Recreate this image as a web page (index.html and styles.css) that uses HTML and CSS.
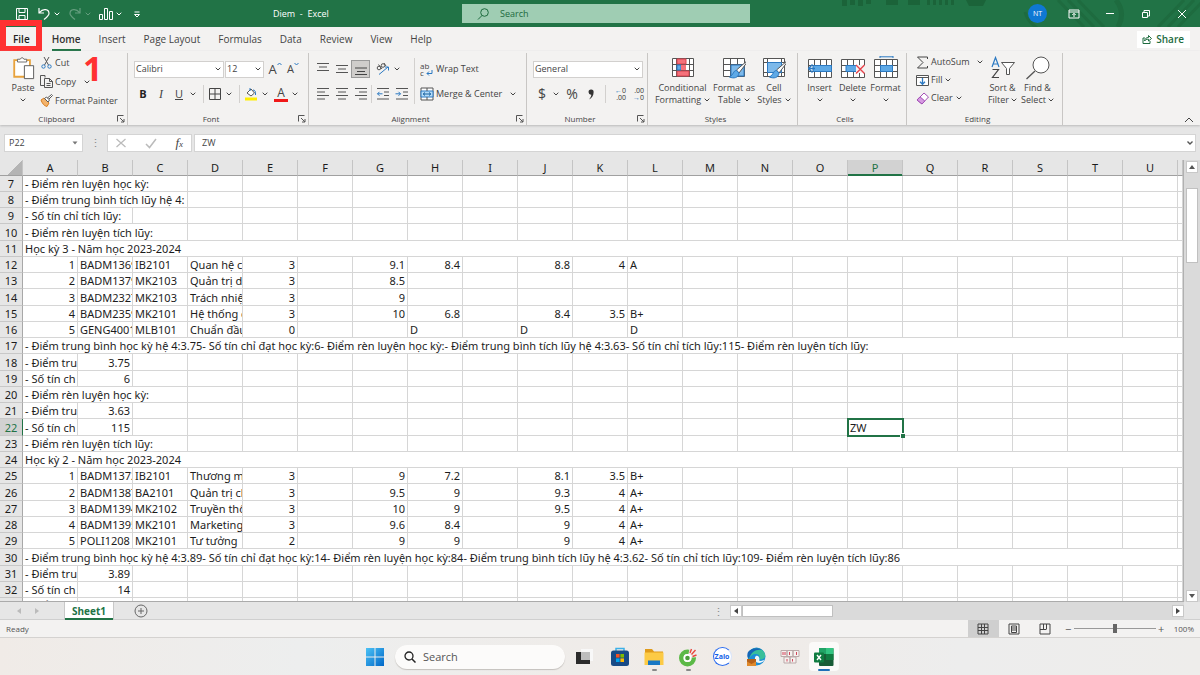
FILE: index.html
```
<!DOCTYPE html>
<html lang="vi">
<head>
<meta charset="utf-8">
<title>Diem - Excel</title>
<link rel="stylesheet" href="styles.css">
</head>
<body>
<svg class="defs" aria-hidden="true">
  <symbol id="chev" viewBox="0 0 6 4"><path d="M.7.7 3 3 5.300.7" fill="none" stroke="#444"/></symbol>
  <symbol id="launch" viewBox="0 0 8 8"><path d="M.5 6.500V.5H6.500M3 3l4 4M7 4v3H4" fill="none" stroke="#555"/></symbol>
  <symbol id="grid" viewBox="0 0 24 20"><path d="M.5.5h23v18H.5zM.5 6.500h23M.5 12.500h23M6.500.5v18M12.500.5v18M18.500.5v18" fill="#fff" stroke="#555"/></symbol>
  <symbol id="brush" viewBox="0 0 18 18"><path d="M17 .8 7.500 9l2.500 3L17.500 2z" fill="#fff" stroke="#555"/><path d="M7.300 9.500c-3 0-2.500 4-6.800 6.500 4 1.800 9 1 9.500-4z" fill="#5ea9e6" stroke="#2b79c2"/></symbol>
</svg>

<header class="titlebar">
  <svg class="pattern" viewBox="0 0 360 27" aria-hidden="true">
    <g fill="#1b6339"><path d="M2 0h5v6H2zM10 0h5v5h-5zM18 0h5v6h-5zM26 0h5v4h-5zM46 0h12v5H46zM68 0h12v5H68zM87 0h3v5h-3zM93 0h3v5h-3zM99 0h3v5h-3zM105 0h3v5h-3zM111 0h3v5h-3zM126 0h20l-3 6h-14z"/></g>
    <g stroke="#1e6b3f" stroke-width="3" fill="none"><path d="M185 12q2 9 12 16M218 0l26 27M228 0l26 27M238 0l26 27M318 27l26-27M328 27l26-27M338 27l24-25"/><path d="M276 0q10 13 2 27" stroke-width="5"/></g>
  </svg>
  <div class="qat">
    <button aria-label="Save"><svg viewBox="0 0 14 14"><path d="M1.500 1.500h11v11h-11zM4 1.500v4h6v-4M4 12.500v-4h6v4" fill="none" stroke="#fff"/></svg></button>
    <button aria-label="Undo"><svg viewBox="0 0 14 14"><path d="M2 1v5h5M2.500 5.500C6 1 12 2 12 6.500c0 2-2 3.500-5 6" fill="none" stroke="#fff" stroke-width="1.200"/></svg></button>
    <button class="drop" aria-label="Undo list"><svg class="chev light"><use href="#chev"/></svg></button>
    <button class="off" aria-label="Redo"><svg viewBox="0 0 14 14"><path d="M12 1v5H7M11.500 5.500C8 1 2 2 2 6.500c0 2 2 3.500 5 6" fill="none" stroke="#fff" stroke-width="1.200"/></svg></button>
    <button class="drop off" aria-label="Redo list"><svg class="chev light"><use href="#chev"/></svg></button>
    <button aria-label="Chart"><svg viewBox="0 0 14 14"><path d="M.5 7.500h3v5h-3zM5.500 1.500h3v11h-3zM10.500 4.500h3v8h-3z" fill="none" stroke="#fff"/></svg></button>
    <button class="drop" aria-label="Chart list"><svg class="chev light"><use href="#chev"/></svg></button>
    <button aria-label="Customize"><svg viewBox="0 0 14 14"><path d="M4.500 5h5M4.500 7.500h5L7 10z" fill="none" stroke="#fff"/></svg></button>
  </div>
  <div class="doc">Diem&nbsp; -&nbsp; Excel</div>
  <label class="top-search"><svg viewBox="0 0 12 12"><circle cx="7.500" cy="4.500" r="3.800" fill="none" stroke="#1d6b3e"/><path d="M5 7.500 1 11.500" stroke="#1d6b3e"/></svg><input type="text" placeholder="Search" aria-label="Search"></label>
  <div class="win">
    <span class="avatar">NT</span>
    <button aria-label="Ribbon options"><svg viewBox="0 0 12 12"><path d="M1 2h10v8H1zM1 4h10M6 9V5.500M4.300 7 6 5.300 7.700 7" fill="none" stroke="#fff"/></svg></button>
    <button aria-label="Minimize"><svg viewBox="0 0 12 12"><path d="M2 5.500h8" stroke="#fff"/></svg></button>
    <button aria-label="Restore"><svg viewBox="0 0 12 12"><path d="M2.500 4.500h5v5h-5zM4 4.500V2.500h5.500V8H7.500" fill="none" stroke="#fff"/></svg></button>
    <button aria-label="Close"><svg viewBox="0 0 12 12"><path d="m2 2 8 8M10 2l-8 8" stroke="#fff"/></svg></button>
  </div>
</header>

<nav class="tabs">
  <a class="file" href="#">File</a><a class="on" href="#">Home</a><a href="#">Insert</a><a href="#">Page Layout</a><a href="#">Formulas</a><a href="#">Data</a><a href="#">Review</a><a href="#">View</a><a href="#">Help</a>
  <button class="share"><svg viewBox="0 0 10 10"><path d="M3 4H1v5.500h7V7M2.500 7c.3-2.500 2-3.500 4-3.500V1.500L9.500 4.500 6.500 7V5.200c-2 0-3 .6-4 1.800z" fill="none" stroke="#1d6b3e"/></svg>Share</button>
  <span class="mark-box"></span>
  <span class="mark-num">1</span>
</nav>

<section class="ribbon">
  <div class="group">
    <div class="body clip">
      <button class="big"><svg viewBox="0 0 24 26"><path d="M2.500 4.500h17v18h-17z" fill="#fff" stroke="#e8a33d" stroke-width="2"/><path d="M6 6.500v-3h3Q11 0 13 3.500h3v3z" fill="#fff" stroke="#666"/><path d="M13.500 10.500h10v14h-10z" fill="#fff" stroke="#555"/></svg>Paste<svg class="chev"><use href="#chev"/></svg></button>
      <div class="list">
        <button><svg viewBox="0 0 13 13"><path d="M4 1l4.500 8M9 1 4.500 9" stroke="#555" fill="none"/><g fill="none" stroke="#2b79c2"><circle cx="3.500" cy="10.500" r="1.700"/><circle cx="9.500" cy="10.500" r="1.700"/></g></svg>Cut</button>
        <button><svg viewBox="0 0 13 13"><path d="M5 2.500V.5H.5v10H4M4.500 3.500h5l3 3v6h-8zM9.500 3.500v3h3M6.500 8.500h4M6.500 10.500h4" fill="none" stroke="#555"/></svg>Copy<svg class="chev gap"><use href="#chev"/></svg></button>
        <button><svg viewBox="0 0 13 13"><path d="M1 6l3-2 5 5-2 3.500C4 12 2 9 1 6z" fill="#f3b36b" stroke="#d97f22"/><path d="m4.500 4.500 2-1.500L9.500 6 8 8zM7.500 4l4-3.500 1 1L9 5" fill="#fff" stroke="#555"/></svg>Format Painter</button>
      </div>
    </div>
    <div class="foot"><span>Clipboard</span><button aria-label="Clipboard settings"><svg><use href="#launch"/></svg></button></div>
  </div>

  <div class="group">
    <div class="body rows">
      <div class="row">
        <span class="combo wide"><select aria-label="Font"><option>Calibri</option></select><svg class="chev"><use href="#chev"/></svg></span>
        <span class="combo narrow"><select aria-label="Font size"><option>12</option></select><svg class="chev"><use href="#chev"/></svg></span>
        <button class="tool letter" aria-label="Grow font">A<svg viewBox="0 0 5 5"><path d="M.5 3 2.500 1l2 2" fill="none" stroke="#2b79c2"/></svg></button>
        <button class="tool letter small" aria-label="Shrink font">A<svg viewBox="0 0 5 5"><path d="m.5 1 2 2 2-2" fill="none" stroke="#2b79c2"/></svg></button>
      </div>
      <div class="row">
        <button class="tool"><b>B</b></button><button class="tool"><i>I</i></button><button class="tool"><u>U</u></button><button class="drop" aria-label="Underline list"><svg class="chev"><use href="#chev"/></svg></button>
        <span class="sep"></span>
        <button class="tool" aria-label="Borders"><svg viewBox="0 0 14 14"><path d="M1.500 1.500h11v11h-11zM7 1.500v11M1.500 7h11" fill="none" stroke="#444"/></svg></button><button class="drop" aria-label="Border list"><svg class="chev"><use href="#chev"/></svg></button>
        <span class="sep"></span>
        <button class="tool" aria-label="Fill color"><svg viewBox="0 0 14 14"><path d="M3 6l4-4 3.500 4L7 9z" fill="#fff" stroke="#555"/><path d="M6 1v3M9 3q3 0 2.500 5" fill="none" stroke="#2b79c2"/><path d="M1 10.500h12v3H1z" fill="#ffee00"/></svg></button><button class="drop" aria-label="Fill list"><svg class="chev"><use href="#chev"/></svg></button>
        <button class="tool fontcolor">A</button><button class="drop" aria-label="Font color list"><svg class="chev"><use href="#chev"/></svg></button>
      </div>
    </div>
    <div class="foot"><span>Font</span><button aria-label="Font settings"><svg><use href="#launch"/></svg></button></div>
  </div>

  <div class="group">
    <div class="body align">
      <div class="rows">
        <div class="row">
          <button class="tool" aria-label="Top align"><svg viewBox="0 0 14 14"><path d="M1 1.500h12M3 5h8M1 8.500h12" stroke="#555"/></svg></button><button class="tool" aria-label="Middle align"><svg viewBox="0 0 14 14"><path d="M1 3.500h12M3 7h8M1 10.500h12" stroke="#555"/></svg></button><button class="tool on" aria-label="Bottom align"><svg viewBox="0 0 14 14"><path d="M1 6h12M3 9.500h8M1 12.500h12" stroke="#444"/></svg></button>
          <span class="sep blank"></span>
          <button class="tool" aria-label="Orientation"><svg viewBox="0 0 14 14"><g fill="none" stroke="#555"><circle cx="3" cy="6" r="1.800"/><path d="M2.500 2.500 6 7"/><circle cx="7" cy="3.500" r="1.800"/><path d="m8 1 2 3"/></g><path d="M3 12.500 12 5M9 5h3.500v3.500" fill="none" stroke="#2b79c2"/></svg></button><button class="drop" aria-label="Orientation list"><svg class="chev"><use href="#chev"/></svg></button>
        </div>
        <div class="row">
          <button class="tool" aria-label="Align left"><svg viewBox="0 0 14 14"><path d="M1 1.500h12M1 5h8M1 8.500h12M1 12h8" stroke="#555"/></svg></button><button class="tool" aria-label="Center"><svg viewBox="0 0 14 14"><path d="M1 1.500h12M3 5h8M1 8.500h12M3 12h8" stroke="#555"/></svg></button><button class="tool" aria-label="Align right"><svg viewBox="0 0 14 14"><path d="M1 1.500h12M5 5h8M1 8.500h12M5 12h8" stroke="#555"/></svg></button>
          <span class="sep"></span>
          <button class="tool" aria-label="Decrease indent"><svg viewBox="0 0 14 14"><path d="M1 1.500h12M8 5h5M8 8.500h5M1 12h12" stroke="#555"/><path d="M6.500 6.800h-5M3.500 4.800l-2 2 2 2" fill="none" stroke="#2b79c2"/></svg></button><button class="tool" aria-label="Increase indent"><svg viewBox="0 0 14 14"><path d="M1 1.500h12M8 5h5M8 8.500h5M1 12h12" stroke="#555"/><path d="M.5 6.800h5M3.500 4.800l2 2-2 2" fill="none" stroke="#2b79c2"/></svg></button>
        </div>
      </div>
      <span class="sep tall"></span>
      <div class="rows">
        <button class="row text"><span class="wrapicon">ab<br>c<svg viewBox="0 0 7 6"><path d="M6 0v3.500H1M3 1.500l-2 2 2 2" fill="none" stroke="#2b79c2"/></svg></span>Wrap Text</button>
        <button class="row text"><svg class="ic14" viewBox="0 0 14 14"><path d="M1 1h12v12H1z" fill="#fff" stroke="#555"/><path d="M1 4h12v6H1z" fill="#b5dbf7" stroke="#2b79c2"/><path d="M7 1v3M7 10v3" stroke="#555"/><path d="M3 7h8M5 5.500 3.300 7 5 8.500M9 5.500 10.700 7 9 8.500" fill="none" stroke="#17609f"/></svg>Merge &amp; Center<svg class="chev gap"><use href="#chev"/></svg></button>
      </div>
    </div>
    <div class="foot"><span>Alignment</span><button aria-label="Alignment settings"><svg><use href="#launch"/></svg></button></div>
  </div>

  <div class="group">
    <div class="body rows number">
      <div class="row"><span class="combo full"><select aria-label="Number format"><option>General</option></select><svg class="chev"><use href="#chev"/></svg></span></div>
      <div class="row">
        <button class="tool sym">$</button><button class="drop" aria-label="Currency list"><svg class="chev"><use href="#chev"/></svg></button><button class="tool sym pct">%</button><button class="tool sym" aria-label="Comma style"><svg viewBox="0 0 14 14"><path d="M7 2.500a2.500 2.500 0 0 1 2.600 2.700C9.600 8.500 8 11 5 12.500c1.500-1.800 2.300-3.200 2.300-4.800A2.500 2.500 0 0 1 7 2.500z" fill="#333"/></svg></button>
        <span class="sep"></span>
        <button class="tool dec"><span><em>←</em>0</span><span>.00</span></button><button class="tool dec"><span>.00</span><span><em>→</em>0</span></button>
      </div>
    </div>
    <div class="foot"><span>Number</span><button aria-label="Number settings"><svg><use href="#launch"/></svg></button></div>
  </div>

  <div class="group">
    <div class="body bigs styles">
      <button class="big"><svg viewBox="0 0 24 24"><path d="M1.500 2.500h21v18h-21zM1.500 8.500h21M1.500 14.500h21M5.500 2.500v18M18.500 2.500v18" fill="#fff" stroke="#555"/><path d="M6 3h9v5H6zM6 15h12v5H6z" fill="#f5717a" stroke="#d8434e"/><path d="M6 9h4v5H6z" fill="#5ea9e6" stroke="#2b79c2"/><path d="M10 9h5v5h-5z" fill="#f5717a"/></svg>Conditional<span>Formatting<svg class="chev"><use href="#chev"/></svg></span></button>
      <button class="big"><svg viewBox="0 0 24 24"><path d="M1.500 2.500h21v18h-21zM1.500 8.500h21M1.500 14.500h21M8.500 2.500v18M15.500 2.500v18" fill="#fff" stroke="#555"/><path d="M9 9h13v11H9z" fill="#7db9ea" stroke="#2b79c2"/><use href="#brush" x="7" y="5" width="18" height="18"/></svg>Format as<span>Table<svg class="chev"><use href="#chev"/></svg></span></button>
      <button class="big"><svg viewBox="0 0 24 24"><path d="M1.500 2.500h21v18h-21zM1.500 6.500h21M1.500 16.500h21M5.500 2.500v18M19.500 2.500v18" fill="#fff" stroke="#555"/><path d="M5.500 6.500h14v10h-14z" fill="#7db9ea" stroke="#2b79c2"/><use href="#brush" x="7" y="5" width="18" height="18"/></svg>Cell<span>Styles<svg class="chev"><use href="#chev"/></svg></span></button>
    </div>
    <div class="foot"><span>Styles</span></div>
  </div>

  <div class="group">
    <div class="body bigs cells">
      <button class="big"><svg viewBox="0 0 24 24"><use href="#grid" y="3" width="24" height="20"/><path d="M5 9.500h18.500v6H5z" fill="#5ea9e6" stroke="#2b79c2"/><path d="M7 12.500H.8M4.500 8.500l-4 4 4 4" fill="none" stroke="#2b79c2" stroke-width="1.400"/></svg>Insert<svg class="chev"><use href="#chev"/></svg></button>
      <button class="big"><svg viewBox="0 0 24 24"><use href="#grid" y="3" width="24" height="20"/><path d="M5 9.500h11v6H5z" fill="#5ea9e6" stroke="#2b79c2"/><path d="M15 9h9v8h-9z" fill="#f3f2f1"/><path d="m15 9 8.500 8.500M23.500 9 15 17.500" stroke="#e8424c" stroke-width="1.400"/></svg>Delete<svg class="chev"><use href="#chev"/></svg></button>
      <button class="big"><svg viewBox="0 0 24 24"><use href="#grid" y="3" width="24" height="20"/><path d="M6.500 9.500h12v6h-12z" fill="#5ea9e6" stroke="#2b79c2"/><path d="M6 .8h13M6 0v2M19 0v2" stroke="#2b79c2"/></svg>Format<svg class="chev"><use href="#chev"/></svg></button>
    </div>
    <div class="foot"><span>Cells</span></div>
  </div>

  <div class="group">
    <div class="body edit">
      <div class="list">
        <button><svg viewBox="0 0 13 13"><path d="M11.500 3V1H1.500L7 6.500 1.500 12h10v-2" fill="none" stroke="#444"/></svg>AutoSum<svg class="chev gap"><use href="#chev"/></svg></button>
        <button><svg viewBox="0 0 13 13"><path d="M.5 1.500h12v10H.5zM.5 3.500h12" fill="#fff" stroke="#555"/><path d="M6.500 4v6M4 7.800l2.500 2.500L9 7.800" fill="none" stroke="#2b79c2" stroke-width="1.300"/></svg>Fill<svg class="chev"><use href="#chev"/></svg></button>
        <button><svg viewBox="0 0 13 13"><path d="M8 1l4.500 4L6 12 1 8z" fill="#fff" stroke="#a24fb5"/><path d="M4 4.800 8.800 9 6 12 1 8z" fill="#d79be2" stroke="#a24fb5"/></svg>Clear<svg class="chev"><use href="#chev"/></svg></button>
      </div>
      <button class="big"><svg viewBox="0 0 24 24"><path d="M1 11 4.500 1.500 8 11M2.300 8h4.500" fill="none" stroke="#2b79c2" stroke-width="1.200"/><path d="M1.500 13.500h6l-6 8h6.500" fill="none" stroke="#444" stroke-width="1.200"/><path d="M10.500 6.500h13l-5 6v6h-3v-6z" fill="#fff" stroke="#555"/></svg>Sort &amp;<span>Filter<svg class="chev"><use href="#chev"/></svg></span></button>
      <button class="big"><svg viewBox="0 0 24 24"><circle cx="15" cy="9" r="8" fill="#fff" stroke="#555"/><path d="m9 15-8.500 8" stroke="#555" stroke-width="1.300"/></svg>Find &amp;<span>Select<svg class="chev"><use href="#chev"/></svg></span></button>
    </div>
    <div class="foot"><span>Editing</span></div>
  </div>
  <button class="collapse" aria-label="Collapse ribbon"><svg viewBox="0 0 10 6"><path d="M1 5l4-4 4 4" fill="none" stroke="#444"/></svg></button>
</section>

<section class="formula">
  <label class="namebox"><input type="text" value="P22" aria-label="Name box"><svg viewBox="0 0 6 4"><path d="M.5.5h5L3 3.500z" fill="#777"/></svg></label>
  <span class="dots">⋮</span>
  <div class="fx">
    <button aria-label="Cancel"><svg viewBox="0 0 12 12"><path d="m1.500 2 9 8M10.500 2l-9 8" stroke="#bbb" stroke-width="1.300"/></svg></button>
    <button aria-label="Enter"><svg viewBox="0 0 12 12"><path d="m1 7 3.500 3.500L11 2" fill="none" stroke="#bbb" stroke-width="1.500"/></svg></button>
    <button class="fn"><i>f</i><sub>x</sub></button>
  </div>
  <label class="entry"><input type="text" value="ZW" aria-label="Formula"><svg viewBox="0 0 6 4"><path d="M.5.5 3 3 5.500.5" fill="none" stroke="#555" stroke-width="1.400"/></svg></label>
</section>

<main class="sheet">
  <div class="view"><table id="cells"></table></div>
  <div class="vbar">
    <button aria-label="Scroll up"><svg viewBox="0 0 6 4"><path d="M0 4h6L3 0z" fill="#555"/></svg></button>
    <span class="thumb"></span>
    <button aria-label="Scroll down"><svg viewBox="0 0 6 4"><path d="M0 0h6L3 4z" fill="#555"/></svg></button>
  </div>
</main>

<section class="strip">
  <div class="sheets">
    <span class="arrows"><svg viewBox="0 0 4 6"><path d="M4 0v6L0 3z" fill="#bbb"/></svg><svg viewBox="0 0 4 6"><path d="M0 0v6l4-3z" fill="#bbb"/></svg></span>
    <button class="tab">Sheet1</button>
    <button class="add" aria-label="New sheet"><svg viewBox="0 0 14 14"><circle cx="7" cy="7" r="6" fill="none" stroke="#666"/><path d="M7 4v6M4 7h6" stroke="#666"/></svg></button>
    <span class="dots">⋮</span>
  </div>
  <div class="hbar">
    <button aria-label="Scroll left"><svg viewBox="0 0 4 6"><path d="M4 0v6L0 3z" fill="#444"/></svg></button>
    <span class="thumb"></span>
    <button class="end" aria-label="Scroll right"><svg viewBox="0 0 4 6"><path d="M0 0v6l4-3z" fill="#444"/></svg></button>
  </div>
</section>

<section class="status">
  <span class="ready">Ready</span>
  <button class="on" aria-label="Normal view"><svg viewBox="0 0 12 12"><path d="M1 1h10v10H1zM1 4.500h10M1 7.500h10M4.500 1v10M7.500 1v10" fill="none" stroke="#444"/></svg></button>
  <button aria-label="Page layout view"><svg viewBox="0 0 12 12"><path d="M1 1h10v10H1zM3.500 3h5v6.500h-5zM4 5h4M4 7h4" fill="none" stroke="#444"/></svg></button>
  <button aria-label="Page break view"><svg viewBox="0 0 12 12"><path d="M1 1h10v10H1zM4.500 1v5M7.500 1v5M1 6.500h6.500" fill="none" stroke="#444"/></svg></button>
  <div class="zoom"><button>−</button><input type="range" aria-label="Zoom" min="0" max="100" value="50"><button>+</button><span>100%</span></div>
</section>

<footer class="taskbar">
  <button class="start" aria-label="Start"><svg viewBox="0 0 20 20"><defs><linearGradient id="w" x2="1" y2="1"><stop stop-color="#4cc2f5"/><stop offset="1" stop-color="#0067c8"/></linearGradient></defs><path d="M1 1h8.500v8.500H1zM10.500 1H19v8.500h-8.500zM1 10.500h8.500V19H1zM10.500 10.500H19V19h-8.500z" fill="url(#w)"/></svg></button>
  <label class="task-search"><svg viewBox="0 0 12 12"><circle cx="5" cy="5" r="4" fill="none" stroke="#222" stroke-width="1.300"/><path d="m8 8 3.500 3.500" stroke="#222" stroke-width="1.500"/></svg><input type="text" placeholder="Search" aria-label="Search Windows"></label>
  <div class="apps">
    <button class="view-btn" aria-label="Task view"><svg viewBox="0 0 20 20"><path d="M7 2h12v12H7z" fill="#f8f8f8"/><path d="M2 5h14v12H2z" fill="#2b2b2b"/><path d="M7 5h9v8H7z" fill="#bdbdbd"/></svg></button>
    <button aria-label="Store"><svg viewBox="0 0 20 20"><path d="M6 4V1.500h8V4" fill="none" stroke="#3cb0e8" stroke-width="1.500"/><rect x="1" y="3.500" width="18" height="15.500" rx="2.500" fill="#174a86"/><path d="M6 7h3.600v3.600H6z" fill="#f25022"/><path d="M10.400 7H14v3.600h-3.600z" fill="#7fba00"/><path d="M6 11.400h3.600V15H6z" fill="#00a4ef"/><path d="M10.400 11.400H14V15h-3.600z" fill="#ffb900"/></svg></button>
    <button class="run" aria-label="Explorer"><svg viewBox="0 0 20 20"><path d="M1 2h7l2 2.500h9V9H1z" fill="#e09b1b"/><path d="M.5 5.500h19V18H.5z" fill="#fcca45"/><path d="M4 13.500h12V18H4z" fill="#1777c4"/></svg></button>
    <button class="run" aria-label="Coc Coc"><svg viewBox="0 0 20 20"><circle cx="9.500" cy="11" r="6.200" fill="none" stroke="#5cb947" stroke-width="4.600"/><path d="M9.500 11 12 0h8v10z" fill="#efedeb"/><circle cx="9.500" cy="11" r="4" fill="#fff"/><circle cx="9.500" cy="11" r="2.300" fill="#4c9c3a"/><path d="m12 6 1.500-4M13.500 7.500 17.500 3M14.500 9.500l4-1.500" stroke="#e9483c" stroke-width="1.400"/></svg></button>
    <button class="zalo"><span>Zalo</span></button>
    <button aria-label="Edge"><svg viewBox="0 0 20 20"><circle cx="10.500" cy="9.500" r="9" fill="#1b8fd6"/><path d="M2 6C5 0 16-1 19 7c1 4-2 6-6 5.500 2-4-1-6-4-5.500-4 .5-6 4-6 7z" fill="#39bf9a"/><path d="M10 9c3-1 4 3 3 4.500 2 1 4.500 0 6-1-2 3-5 4-8 3-2-1-3-5-1-6.500z" fill="#eef6fb"/><path d="M2 5C5 1 12 0 16 3 10 2 5 5 3 12 1 10 1 7 2 5z" fill="#1466b8"/><path d="M1 12h9v7H1z" fill="#b4611b"/><path d="M1 14.500 5.500 17 10 14.500V19H1z" fill="#e08a2c"/></svg></button>
    <button aria-label="Unikey"><svg viewBox="0 0 20 20"><path d="M1 3.500h6v6H1zM7 3.500h6v6H7zM13 3.500h6v6h-6zM4 10h6v6H4zM10 10h6v6h-6z" fill="#f6f1ef" stroke="#bba9a9"/><path d="M3 5v3M5 5v3M9.500 5v3M16.500 5v3M7 12v2.500M12.500 12v2.500" fill="none" stroke="#d2455a"/></svg></button>
    <button class="active" aria-label="Excel"><svg viewBox="0 0 20 20"><rect x="5" y="1" width="14.500" height="18" rx="1" fill="#185c37"/><path d="M5 1h7v6H5z" fill="#21a366"/><path d="M12 1h7.500v6H12z" fill="#33c481"/><path d="M12 7h7.500v6H12z" fill="#107c41"/><rect y="5.500" width="10" height="10" rx="1" fill="#107c41"/><path d="m3 8 4 5M7 8l-4 5" stroke="#fff" stroke-width="1.400"/></svg></button>
  </div>
</footer>
<script src="sheet.js"></script>
</body>
</html>
```
FILE: sheet.js
```
const columns = 'ABCDEFGHIJKLMNOPQRSTU'.split('');
const full = columns.length + 1;

// Each row maps a column letter to its text; span is the width of column A in columns.
const rows = [
  { span: 3, A: '- Điểm rèn luyện học kỳ:' },
  { span: 3, A: '- Điểm trung bình tích lũy hệ 4:' },
  { span: 2, A: '- Số tín chỉ tích lũy:' },
  { span: 3, A: '- Điểm rèn luyện tích lũy:' },
  { span: full, A: 'Học kỳ 3 - Năm học 2023-2024' },
  { A: 1, B: 'BADM1369', C: 'IB2101', D: 'Quan hệ c', E: 3, G: 9.1, H: 8.4, J: 8.8, K: 4, L: 'A' },
  { A: 2, B: 'BADM1379', C: 'MK2103', D: 'Quản trị d', E: 3, G: 8.5 },
  { A: 3, B: 'BADM2327', C: 'MK2103', D: 'Trách nhiệ', E: 3, G: 9 },
  { A: 4, B: 'BADM2359', C: 'MK2101', D: 'Hệ thống c', E: 3, G: 10, H: 6.8, J: 8.4, K: 3.5, L: 'B+' },
  { A: 5, B: 'GENG4001', C: 'MLB101', D: 'Chuẩn đầu', E: 0, H: 'D', J: 'D', L: 'D' },
  { span: full, A: '- Điểm trung bình học kỳ hệ 4:3.75- Số tín chỉ đạt học kỳ:6- Điểm rèn luyện học kỳ:- Điểm trung bình tích lũy hệ 4:3.63- Số tín chỉ tích lũy:115- Điểm rèn luyện tích lũy:' },
  { A: '- Điểm tru', B: 3.75 },
  { A: '- Số tín ch', B: 6 },
  { span: 3, A: '- Điểm rèn luyện học kỳ:' },
  { A: '- Điểm tru', B: 3.63 },
  { A: '- Số tín ch', B: 115, P: 'ZW' },
  { span: 3, A: '- Điểm rèn luyện tích lũy:' },
  { span: full, A: 'Học kỳ 2 - Năm học 2023-2024' },
  { A: 1, B: 'BADM1372', C: 'IB2101', D: 'Thương m', E: 3, G: 9, H: 7.2, J: 8.1, K: 3.5, L: 'B+' },
  { A: 2, B: 'BADM1387', C: 'BA2101', D: 'Quản trị ch', E: 3, G: 9.5, H: 9, J: 9.3, K: 4, L: 'A+' },
  { A: 3, B: 'BADM1394', C: 'MK2102', D: 'Truyền thô', E: 3, G: 10, H: 9, J: 9.5, K: 4, L: 'A+' },
  { A: 4, B: 'BADM1395', C: 'MK2101', D: 'Marketing', E: 3, G: 9.6, H: 8.4, J: 9, K: 4, L: 'A+' },
  { A: 5, B: 'POLI1208', C: 'MK2101', D: 'Tư tưởng', E: 2, G: 9, H: 9, J: 9, K: 4, L: 'A+' },
  { span: full, A: '- Điểm trung bình học kỳ hệ 4:3.89- Số tín chỉ đạt học kỳ:14- Điểm rèn luyện học kỳ:84- Điểm trung bình tích lũy hệ 4:3.62- Số tín chỉ tích lũy:109- Điểm rèn luyện tích lũy:86' },
  { A: '- Điểm tru', B: 3.89 },
  { A: '- Số tín ch', B: 14 },
  { A: '- Điểm' }
];

const table = document.getElementById('cells');
const cols = '<colgroup><col class="c-num">' + columns.map(() => '<col class="c">').join('') + '<col></colgroup>';
const head = '<thead><tr><th class="corner"></th>' +
  columns.map(c => `<th scope="col"${c === 'P' ? ' class="on"' : ''}>${c}</th>`).join('') + '<th></th></tr></thead>';

const body = rows.map((row, i) => {
  const number = i + 7;
  let html = `<th scope="row"${number === 22 ? ' class="on"' : ''}>${number === 33 ? '' : number}</th>`;
  const span = row.span || 1;
  html += `<td colspan="${span}"${typeof row.A === 'number' ? ' class="n"' : ''}>${row.A}</td>`;
  columns.slice(span).forEach(c => {
    const value = row[c] ?? '';
    const kind = c === 'P' && number === 22 ? 'picked' : typeof value === 'number' ? 'n' : '';
    html += `<td${kind ? ` class="${kind}"` : ''}>${value}</td>`;
  });
  return `<tr>${html}${span === full ? '' : '<td></td>'}</tr>`;
}).join('');

table.innerHTML = cols + head + '<tbody>' + body + '</tbody>';
```
FILE: styles.css
```
* { box-sizing: border-box; }
body {
  margin: 0; height: 100vh; display: flex; flex-direction: column; overflow: hidden;
  background: #e6e6e6; color: #444; font: 9px/12px "Open Sans", "Noto Sans", sans-serif;
}
button, input, select { font: inherit; color: inherit; border: 0; padding: 0; margin: 0; background: none; outline: 0; }
input { min-width: 0; }
svg { display: block; flex: none; }
a { color: inherit; text-decoration: none; }
.defs { position: absolute; width: 0; height: 0; }
.chev { width: 6px; height: 4px; }
.chev.light { filter: brightness(0) invert(1); }
.chev.gap { margin-left: 6px; }
.off { opacity: .3; }

/* Title bar */
.titlebar {
  position: relative; flex: none; height: 27px; background: #217346; color: #fff;
  display: grid; grid-template-columns: 273fr 189fr 288fr 450fr; align-items: center;
}
.pattern { position: absolute; right: 0; top: 0; width: 360px; height: 27px; }
.qat { display: flex; align-items: center; padding-left: 13px; }
.qat button { width: 17px; display: flex; justify-content: center; align-items: center; }
.qat button + button { margin-left: 5px; }
.qat button.drop { width: 8px; margin-left: 1px; }
.qat svg:not(.chev) { width: 14px; height: 14px; }
.doc { font-size: 9px; }
.top-search { height: 19px; background: #9fcdb3; display: flex; align-items: center; gap: 11px; padding-left: 15px; color: #1d6b3e; }
.top-search svg { width: 12px; height: 12px; }
.top-search input { flex: 1; font-size: 9px; }
.top-search input::placeholder { color: #1d6b3e; opacity: 1; }
.win { position: relative; display: flex; align-items: center; justify-content: flex-end; }
.win button { width: 36px; display: flex; justify-content: center; }
.win svg { width: 12px; height: 12px; }
.avatar { width: 19px; height: 19px; border-radius: 50%; background: #0f78d4; font-size: 7px; line-height: 19px; text-align: center; margin-right: 9px; }

/* Tabs */
.tabs { position: relative; flex: none; height: 24px; background: #f3f2f1; display: flex; align-items: center; gap: 18px; padding: 0 10px 0 13px; font-size: 10px; }
.tabs a { line-height: 20px; }
.tabs .file { font-weight: 600; color: #222; margin-right: 4px; }
.tabs .on { font-weight: 600; color: #333; box-shadow: 0 2px #217346; }
.share { margin-left: auto; height: 17px; padding: 0 6px 0 5px; display: flex; align-items: center; gap: 4px; background: #fff; color: #1d6b3e; font-weight: 600; font-size: 10px; }
.share svg { width: 10px; height: 10px; }
.mark-box { position: absolute; left: 0; top: -7px; width: 42px; height: 32px; border: 6px solid #ff3131; pointer-events: none; }
.mark-num { position: absolute; left: 83px; top: 23px; color: #ff3131; font: 700 34px/36px "Open Sans", sans-serif; z-index: 2; }

/* Ribbon */
.ribbon {
  position: relative; flex: none; height: 74px; padding-top: 2px; background: #f3f2f1; box-shadow: 0 1px 2px #bbb;
  display: grid; grid-template-columns: 128px 181px 218px 121px 150px 109px 156px 1fr;
}
.group { display: flex; flex-direction: column; border-right: 1px solid #c8c6c4; min-width: 0; }
.body { flex: 1; display: flex; }
.foot { position: relative; height: 12px; display: flex; justify-content: center; align-items: center; font-size: 8px; padding-right: 14px; }
.foot button { position: absolute; right: 2px; top: 2px; }
.foot svg { width: 8px; height: 8px; }
.ribbon button { display: flex; align-items: center; justify-content: center; white-space: nowrap; }
.ribbon .big { flex-direction: column; justify-content: flex-start; }
.big > svg:first-child { width: 24px; height: 24px; margin-bottom: 2px; }
.big > .chev { margin-top: 4px; }
.big span { display: flex; align-items: center; gap: 3px; }
.list { display: flex; flex-direction: column; align-items: flex-start; }
.list button { height: 19px; gap: 2px; }
.list button > svg:first-child { width: 13px; height: 13px; }
.clip { padding: 0 0 0 11px; gap: 5px; }
.clip .big { padding-top: 3px; }
.rows { flex-direction: column; display: flex; padding-top: 7px; gap: 7px; }
.row { display: flex; align-items: center; height: 18px; }
.group > .rows { padding-left: 6px; }
.tool { width: 18px; height: 18px; flex: none; font-size: 11px; }
.tool svg { width: 14px; height: 14px; }
.tool b { color: #222; }
.tool i { font-family: "Liberation Serif", serif; font-size: 12px; }
.tool.on { background: #cfcdcb; box-shadow: inset 0 0 0 1px #999; }
.drop { width: 10px; height: 18px; }
.sep { width: 1px; height: 18px; background: #d2d0ce; margin: 0 2px 0 5px; flex: none; }
.sep.tall { height: 46px; margin: 5px 5px 0 0; }
.align .sep:not(.tall) { margin: 0 1px; }
.align .sep.blank { background: none; }
.combo { position: relative; height: 17px; background: #fff; border: 1px solid #d2d0ce; display: flex; align-items: center; }
.combo select { appearance: none; width: 100%; padding-left: 1px; height: 15px; }
.combo .chev { position: absolute; right: 2px; }
.combo.wide { width: 90px; }
.combo.narrow { width: 39px; margin: 0 2px 0 1px; }
.combo.full { width: 110px; }
.letter { font-size: 13px; }
.letter.small { font-size: 11px; }
.letter svg { width: 5px; height: 5px; align-self: flex-start; margin-top: 2px; }
.fontcolor { font-size: 12px; line-height: 12px; }
.tool.fontcolor { width: 14px; height: 15px; margin: 0 2px 0 4px; border-bottom: 3px solid #f01818; }
.align { padding-left: 4px; }
.align .tool { width: 19px; }
.align > .rows:first-child { width: 101px; }
.text { gap: 2px; }
.ribbon .text { justify-content: flex-start; }
.ic14 { width: 14px; height: 14px; }
.wrapicon { width: 14px; font-size: 8px; line-height: 7px; text-align: left; position: relative; }
.wrapicon svg { position: absolute; right: 1px; bottom: 0; width: 7px; height: 6px; }
.number { padding-left: 5px; }
.sym { font-size: 14px; }
.pct { margin: 0 1px 0 2px; }
.dec { font-size: 7px; line-height: 7px; color: #333; }
.ribbon .dec { flex-direction: column; align-items: flex-end; }
.dec em { font-style: normal; color: #2b79c2; font-weight: 700; }
.bigs { padding-top: 3px; }
.styles { padding-left: 7px; gap: 4px; }
.styles .big:nth-child(1) { width: 55px; }
.styles .big:nth-child(2) { width: 40px; }
.styles .big:nth-child(3) { width: 32px; }
.cells { padding-left: 5px; }
.cells .big { width: 33px; }
.edit { padding: 0 0 0 9px; }
.edit .list { width: 69px; }
.edit .list button { height: 18px; }
.edit .chev { margin-left: 1px; }
.edit .chev.gap { margin-left: 5px; }
.edit .big { width: 35px; padding-top: 3px; }
.edit .big span { gap: 1px; }
.collapse { position: absolute; right: 6px; bottom: 2px; }
.collapse svg { width: 10px; height: 6px; }

/* Formula bar */
.formula { flex: none; margin: 9px 4px 8px; height: 18px; display: flex; }
.formula label, .fx { background: #fff; border: 1px solid #d4d4d4; display: flex; align-items: center; }
.namebox { width: 79px; padding: 0 4px; }
.namebox input, .entry input { flex: 1; width: 20px; }
.formula label svg { width: 6px; height: 4px; }
.dots { width: 24px; text-align: center; font-size: 11px; line-height: 17px; color: #888; }
.fx { width: 85px; justify-content: space-between; padding: 0 8px 0 7px; margin-right: 2px; }
.fx svg { width: 12px; height: 12px; }
.fn { font: 13px "Liberation Serif", serif; line-height: 14px; }
.fn sub { font-size: 9px; vertical-align: baseline; font-style: italic; }
.entry { flex: 1; padding: 0 2px 0 7px; }

/* Grid */
.sheet { flex: 1; min-height: 0; display: flex; }
.view { flex: 1; min-width: 0; overflow: hidden; background: #fff; border-right: 1px solid #b0b0b0; border-bottom: 1px solid #ababab; }
table { width: 100%; table-layout: fixed; border-collapse: separate; border-spacing: 0; font: 11px/15px "Noto Sans", "Open Sans", sans-serif; color: #1c1c1c; }
.c-num { width: 23px; }
.c { width: 55px; }
td, th { padding: 0 2px; height: 16px; border-right: 1px solid #d6d6d6; border-bottom: 1px solid #d6d6d6; overflow: hidden; white-space: nowrap; font-weight: 400; text-align: left; }
tbody tr:nth-child(4n) > * { height: 17px; }
th { background: #e6e6e6; text-align: center; padding: 0; }
thead th { border-right-color: #c4c4c4; border-bottom-color: #a0a0a0; }
tbody th { border-right-color: #a8a8a8; border-bottom-color: #c8c8c8; }
.corner { background: linear-gradient(135deg, #e6e6e6 62%, #b4b4b4 62%); }
th.on { background: #d2d2d2; color: #217346; }
thead th.on { box-shadow: inset 0 -1px #217346; border-bottom-color: #217346; }
tbody th.on { border-right-color: #217346; }
.n { text-align: right; }
.picked { position: relative; overflow: visible; outline: 2px solid #217346; outline-offset: -1px; }
.picked::after { content: ""; position: absolute; right: -3px; bottom: -3px; width: 4px; height: 4px; background: #217346; border: 1px solid #fff; border-width: 1px 0 0 1px; }
.vbar { width: 16px; padding: 1px 2px 0; display: flex; flex-direction: column; background: #dadada; }
.vbar button, .hbar button { width: 12px; height: 12px; flex: none; background: #fff; border: 1px solid #c8c8c8; display: flex; align-items: center; justify-content: center; }
.vbar button svg { width: 6px; height: 4px; }
.vbar button:last-child { margin-top: auto; }
.vbar .thumb { height: 17%; margin-top: 15px; background: #fff; border: 1px solid #c0c0c0; }

/* Sheet tabs */
.strip { flex: none; height: 18px; display: grid; grid-template-columns: 730fr 454fr; padding-right: 16px; border-bottom: 1px solid #cfcfcf; }
.sheets { display: flex; align-items: center; }
.arrows { width: 64px; padding-left: 17px; display: flex; gap: 14px; }
.arrows svg { width: 4px; height: 6px; }
.tab { width: 50px; height: 18px; align-self: flex-start; background: #fff; color: #217346; font-weight: 700; font-size: 10px; line-height: 14px; border: 1px solid #c8c8c8; border-width: 0 1px; box-shadow: inset 0 -2px #217346; }
.add { margin-left: 20px; }
.add svg { width: 14px; height: 14px; }
.sheets .dots { margin-left: auto; }
.hbar { display: flex; align-items: center; background: #dadada; }
.hbar svg { width: 4px; height: 6px; }
.hbar .thumb { width: 20%; height: 12px; background: #fff; border: 1px solid #c0c0c0; }
.hbar .end { margin-left: auto; }

/* Status bar */
.status { flex: none; height: 18px; background: #f3f2f1; border-bottom: 1px solid #d4d2d0; display: flex; align-items: center; padding-right: 6px; font-size: 8px; color: #555; }
.ready { flex: 1; padding-left: 6px; }
.status > button { width: 31px; height: 17px; display: flex; align-items: center; justify-content: center; }
.status > .on { background: #cfcfcf; }
.status svg { width: 12px; height: 12px; }
.zoom { display: flex; align-items: center; padding-left: 2px; }
.zoom button { width: 11px; font-size: 11px; }
.zoom input { appearance: none; width: 82px; height: 12px; background: linear-gradient(#999, #999) center / 100% 1px no-repeat; }
.zoom input::-webkit-slider-thumb { appearance: none; width: 4px; height: 9px; background: #666; }
.zoom span { padding-left: 7px; }

/* Taskbar */
.taskbar { flex: none; height: 37px; padding-left: 4px; background: linear-gradient(90deg, #f0ebe7, #edeeee 25%, #f0ebe7 60%, #ededed 80%, #eeedeb); display: flex; align-items: center; justify-content: center; }
.start svg { width: 20px; height: 20px; }
.task-search { width: 170px; height: 24px; margin: 0 4px 0 10px; border-radius: 12px; background: #fcfbfa; box-shadow: 0 1px 1px #c4c0bd; display: flex; align-items: center; gap: 7px; padding: 0 9px; font-size: 11px; }
.task-search svg { width: 12px; height: 12px; }
.task-search input { width: 120px; }
.task-search input::placeholder { color: #555; opacity: 1; }
.apps { display: flex; gap: 4px; }
.apps button { position: relative; width: 30px; height: 29px; border-radius: 4px; display: flex; align-items: center; justify-content: center; }
.apps .view-btn { margin-right: 2px; }
.apps svg { width: 20px; height: 20px; }
.apps .active { background: #fbfaf9; }
.run::after, .active::after { content: ""; position: absolute; bottom: 0; width: 5px; height: 2px; border-radius: 1px; background: #888; }
.apps .active::after { width: 12px; background: #1d6fb8; }
.zalo span { width: 19px; height: 19px; border-radius: 50%; background: #fff; border: 1px solid #2a6cf0; border-right-color: #d8e4fb; color: #1560e8; font-size: 7px; line-height: 17px; font-weight: 700; text-align: center; }
```
